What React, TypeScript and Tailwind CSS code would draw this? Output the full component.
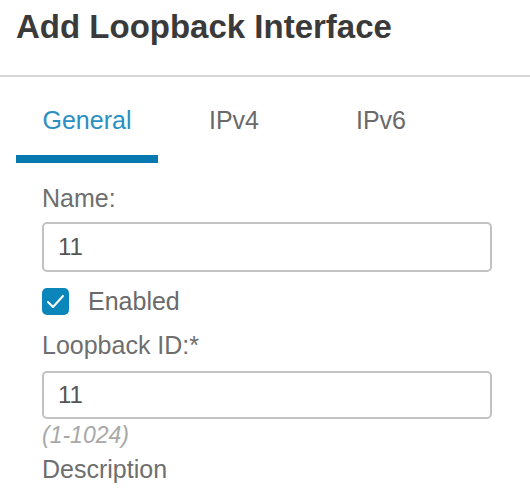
import React from "react";

function App() {
  return (
    <div className="w-[530px] h-[490px] bg-white overflow-hidden font-['Liberation_Sans',Arial,sans-serif]">
      <div className="h-[77px] border-b-2 border-[#d6d6d6] pl-4 pt-[7px]">
        <div className="text-[33px] font-bold text-[#3a3a3a] leading-[40px]">
          Add Loopback Interface
        </div>
      </div>
      <div className="flex pl-4 pt-[28px] gap-[5px]">
        <div className="w-[142px] flex flex-col items-center">
          <div className="text-[25px] leading-[30px] text-[#2a8fc2]">General</div>
          <div className="mt-[20px] h-[8px] w-full bg-[#0679b0]" />
        </div>
        <div className="w-[142px] flex flex-col items-center">
          <div className="text-[25px] leading-[30px] text-[#6a6a6a]">IPv4</div>
        </div>
        <div className="w-[142px] flex flex-col items-center">
          <div className="text-[25px] leading-[30px] text-[#6a6a6a]">IPv6</div>
        </div>
      </div>
      <div className="pl-[42px] w-[492px] pt-[20px] flex flex-col">
        <div className="text-[25px] leading-[30px] text-[#6e6e6e]">Name:</div>
        <input
          className="mt-[9px] h-[50px] w-[450px] rounded-[5px] border-2 border-[#c2c2c2] px-[14px] text-[24px] text-[#555555] focus:outline-none"
          defaultValue="11"
        />
        <div className="mt-[14px] flex items-center gap-[19px]">
          <div className="w-[27px] h-[27px] rounded-[5px] bg-[#0b86bb] flex items-center justify-center">
            <svg width="19" height="15" viewBox="0 0 19 15" fill="none">
              <path d="M2 8 L7 13 L17 2" stroke="white" strokeWidth="2" strokeLinecap="round" strokeLinejoin="round" />
            </svg>
          </div>
          <div className="text-[25px] leading-[30px] text-[#6a6a6a]">Enabled</div>
        </div>
        <div className="mt-[14px] text-[25px] leading-[30px] text-[#6e6e6e]">Loopback ID:*</div>
        <input
          className="mt-[11px] h-[48px] w-[450px] rounded-[5px] border-2 border-[#c2c2c2] px-[14px] text-[24px] text-[#555555] focus:outline-none"
          defaultValue="11"
        />
        <div className="mt-[2px] text-[23px] leading-[28px] italic text-[#a8a8a8]">(1-1024)</div>
        <div className="mt-[5px] text-[25px] leading-[30px] text-[#6e6e6e]">Description</div>
      </div>
    </div>
  );
}

export default App;
